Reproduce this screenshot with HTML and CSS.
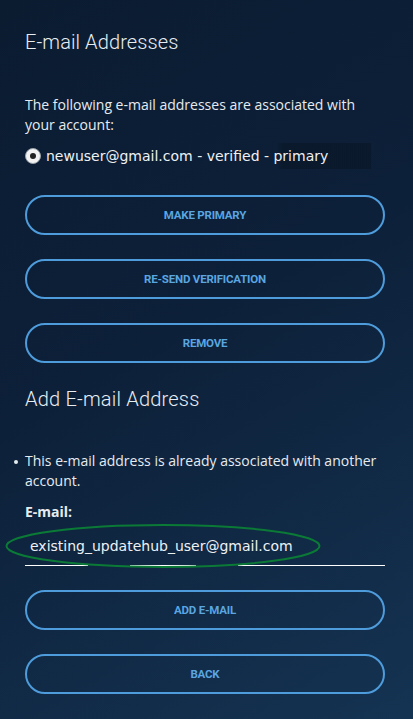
FILE: index.html
```html
<!DOCTYPE html>
<html lang="en">
<head>
<meta charset="utf-8">
<title>E-mail Addresses</title>
<link rel="stylesheet" href="styles.css">
</head>
<body>
<main class="page">
  <h1 class="title">E-mail Addresses</h1>
  <p class="intro">The following e-mail addresses are associated with your account:</p>
  <label class="email-row">
    <span class="radio"><span class="radio-dot"></span></span>
    <span class="email-text">newuser@gmail.com - verified - primary</span>
  </label>
  <div class="actions">
    <button class="btn">MAKE PRIMARY</button>
    <button class="btn">RE-SEND VERIFICATION</button>
    <button class="btn">REMOVE</button>
  </div>
  <h2 class="title sub">Add E-mail Address</h2>
  <ul class="errors">
    <li>This e-mail address is already associated with another account.</li>
  </ul>
  <div class="field">
    <label class="field-label">E-mail:</label>
    <div class="input-wrap">
      <div class="input">existing_updatehub_user@gmail.com</div>
      <svg class="annot" width="318" height="46" viewBox="0 0 318 46"><ellipse cx="159" cy="23" rx="156.5" ry="21" fill="none" stroke="#0b7a36" stroke-width="2"/></svg>
    </div>
  </div>
  <div class="actions bottom">
    <button class="btn">ADD E-MAIL</button>
    <button class="btn">BACK</button>
  </div>
</main>
</body>
</html>
```
FILE: styles.css
```css
html, body {
  margin: 0;
  padding: 0;
}
body {
  width: 413px;
  height: 719px;
  overflow: hidden;
  background: linear-gradient(150deg, #0b1c31 0%, #0d2039 45%, #143352 100%);
  color: #e6ebf0;
  font-family: "Open Sans", "Noto Sans", sans-serif;
}
.page {
  padding: 0 28px 0 25px;
}
.title {
  margin: 0;
  padding-top: 28px;
  font-family: Roboto, sans-serif;
  font-weight: 300;
  font-size: 20px;
  line-height: 28px;
  color: #e8edf2;
  letter-spacing: 0.1px;
}
.title.sub {
  padding-top: 22px;
  letter-spacing: 0.2px;
}
.intro {
  margin: 39px 0 0 0;
  font-size: 14px;
  line-height: 20px;
}
.email-row {
  display: flex;
  align-items: center;
  gap: 5px;
  margin-top: 8px;
  height: 26px;
  width: 346px;
}
.radio {
  width: 14px;
  height: 14px;
  border-radius: 50%;
  background: #f2f2f2;
  border: 1px solid #9aa3ab;
  display: flex;
  align-items: center;
  justify-content: center;
  flex: none;
}
.radio-dot {
  width: 6px;
  height: 6px;
  border-radius: 50%;
  background: #222;
}
.email-text {
  flex: 1;
  height: 26px;
  line-height: 26px;
  font-family: "DejaVu Sans", sans-serif;
  font-size: 14px;
  color: #eef1f4;
  background: linear-gradient(90deg, rgba(8,20,34,0) 0%, rgba(8,20,34,0) 71%, rgba(8,20,34,0.55) 73%);
}
.actions {
  display: flex;
  flex-direction: column;
  gap: 24px;
  margin-top: 26px;
}
.btn {
  height: 40px;
  width: 360px;
  border: 2px solid #4e9cdb;
  border-radius: 20px;
  background: transparent;
  color: #5aa6e1;
  font-family: Roboto, sans-serif;
  font-weight: 700;
  font-size: 11.5px;
  letter-spacing: -0.2px;
  padding: 0;
  cursor: pointer;
}
.errors {
  margin: 38px 0 0 0;
  padding: 0;
  list-style: none;
  font-size: 14px;
  line-height: 20px;
}
.errors li {
  position: relative;
}
.errors li::before {
  content: "";
  position: absolute;
  left: -11px;
  top: 9px;
  width: 4px;
  height: 4px;
  border-radius: 50%;
  background: #e6ebf0;
}
.field {
  margin-top: 10px;
}
.field-label {
  display: block;
  font-weight: 700;
  font-size: 14px;
  line-height: 22px;
}
.input-wrap {
  position: relative;
  width: 360px;
}
.input {
  box-sizing: border-box;
  height: 43px;
  padding: 12px 0 0 5px;
  font-family: "DejaVu Sans", sans-serif;
  font-size: 14px;
  line-height: 22px;
  color: #eef1f4;
  background:
    linear-gradient(90deg, #fff 0 63px, transparent 63px 105px, #fff 105px 171px, transparent 171px 213px, #fff 213px 360px) bottom / 100% 1px no-repeat;
}
.annot {
  position: absolute;
  left: -21px;
  top: 0;
  pointer-events: none;
}
.actions.bottom {
  margin-top: 24px;
}
```
